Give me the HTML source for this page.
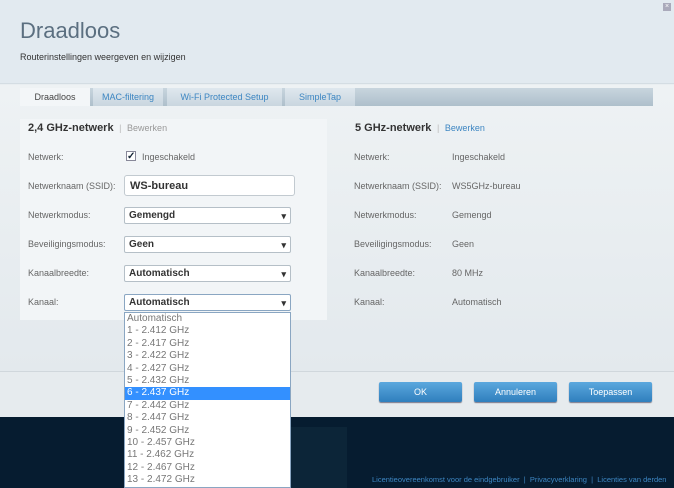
<!DOCTYPE html>
<html><head><style>
*{margin:0;padding:0;box-sizing:border-box}
body{width:674px;height:488px;overflow:hidden;font-family:"Liberation Sans",sans-serif;background:#e9eef1;position:relative}
.a{position:absolute}
.top{left:0;top:0;width:674px;height:84px;background:#e2eaf0;border-bottom:1px solid #d4dde3}
h1{position:absolute;left:20px;top:18px;font-weight:normal;font-size:22px;color:#5b6f80}
.sub{left:20px;top:52px;font-size:9px;color:#333}
.main{left:0;top:85px;width:674px;height:286px;background:linear-gradient(#eef2f4,#e3e9ed)}
.tabs{left:20px;top:88px;width:633px;height:18px;background:linear-gradient(#c8d5de,#aebfcb)}
.tab{position:absolute;top:0;height:18px;font-size:9px;color:#3d86c2;padding-top:4px;text-align:center;background:linear-gradient(#dfe8ee,#c9d6df)}
.lp{left:20px;top:119px;width:307px;height:201px;background:#f2f5f7}
.lbl{font-size:9px;color:#666}
.h{font-size:11px;font-weight:bold;color:#333}
.lnk{font-size:9px}
.sel{position:absolute;left:124px;width:167px;height:17px;background:#fff;border:1px solid #b5bfc7;border-radius:2px;font-size:10px;font-weight:bold;color:#333;padding:0 4px;line-height:16px}
.sel:after{content:"▾";position:absolute;right:4px;top:0;font-size:9px}
.list{left:124px;top:312px;width:167px;height:176px;background:#fff;border:1px solid #8aa6c2;font-size:10px;color:#777}
.list div{height:12.4px;line-height:12.4px;padding-left:2px}
.list .hl{background:#3390ff;color:#fff}
.foot{left:0;top:371px;width:674px;height:46px;background:#e6ebee;border-top:1px solid #d0d7dc}
.btn{position:absolute;top:382px;width:83px;height:20px;border-radius:2px;background:linear-gradient(#5ba8de,#2f7fbd);color:#fff;font-size:9px;text-align:center;line-height:20px;box-shadow:0 1px 1px #778}
.dark{left:0;top:417px;width:674px;height:71px;background:#061c30}
</style></head><body>
<div class="a top"></div>
<h1>Draadloos</h1>
<div class="a sub">Routerinstellingen weergeven en wijzigen</div>
<div class="a" style="right:3px;top:3px;width:8px;height:8px;background:#aab;font-size:7px;color:#fff;line-height:8px;text-align:center">×</div>
<div class="a main"></div>
<div class="a tabs">
<div class="tab" style="left:0;width:70px;background:#f3f6f8;color:#444">Draadloos</div>
<div class="tab" style="left:73px;width:70px">MAC-filtering</div>
<div class="tab" style="left:147px;width:115px">Wi-Fi Protected Setup</div>
<div class="tab" style="left:265px;width:70px">SimpleTap</div>
</div>
<div class="a lp"></div>
<div class="a h" style="left:28px;top:122px">2,4 GHz-netwerk <span style="color:#bbb;font-weight:normal;font-size:9px">&nbsp;|&nbsp;</span> <span class="lnk" style="color:#999;font-weight:normal">Bewerken</span></div>
<div class="a h" style="left:355px;top:122px">5 GHz-netwerk <span style="color:#bbb;font-weight:normal;font-size:9px">&nbsp;|&nbsp;</span> <span class="lnk" style="color:#3d86c2;font-weight:normal">Bewerken</span></div>
<div class="a lbl" style="left:28px;top:152px">Netwerk:</div>
<div class="a lbl" style="left:28px;top:181px">Netwerknaam (SSID):</div>
<div class="a lbl" style="left:28px;top:210px">Netwerkmodus:</div>
<div class="a lbl" style="left:28px;top:239px">Beveiligingsmodus:</div>
<div class="a lbl" style="left:28px;top:268px">Kanaalbreedte:</div>
<div class="a lbl" style="left:28px;top:297px">Kanaal:</div>
<div class="a" style="left:126px;top:151px;width:10px;height:10px;border:1px solid #889;background:#fff;font-size:10px;line-height:9px;color:#123;font-weight:bold">✓</div>
<div class="a lbl" style="left:142px;top:152px">Ingeschakeld</div>
<div class="a" style="left:124px;top:175px;width:171px;height:21px;background:#fff;border:1px solid #c2cad0;border-radius:3px;font-size:11px;font-weight:bold;color:#333;padding:4px 5px">WS-bureau</div>
<div class="sel" style="top:207px">Gemengd</div>
<div class="sel" style="top:236px">Geen</div>
<div class="sel" style="top:265px">Automatisch</div>
<div class="sel" style="top:294px;border-color:#8aa6c2">Automatisch</div>
<div class="a lbl" style="left:354px;top:152px">Netwerk:</div>
<div class="a lbl" style="left:354px;top:181px">Netwerknaam (SSID):</div>
<div class="a lbl" style="left:354px;top:210px">Netwerkmodus:</div>
<div class="a lbl" style="left:354px;top:239px">Beveiligingsmodus:</div>
<div class="a lbl" style="left:354px;top:268px">Kanaalbreedte:</div>
<div class="a lbl" style="left:354px;top:297px">Kanaal:</div>
<div class="a lbl" style="left:452px;top:152px">Ingeschakeld</div>
<div class="a lbl" style="left:452px;top:181px">WS5GHz-bureau</div>
<div class="a lbl" style="left:452px;top:210px">Gemengd</div>
<div class="a lbl" style="left:452px;top:239px">Geen</div>
<div class="a lbl" style="left:452px;top:268px">80 MHz</div>
<div class="a lbl" style="left:452px;top:297px">Automatisch</div>
<div class="a foot"></div>
<div class="btn" style="left:379px">OK</div>
<div class="btn" style="left:474px">Annuleren</div>
<div class="btn" style="left:569px">Toepassen</div>
<div class="a dark"></div>
<div class="a" style="left:225px;top:427px;width:122px;height:61px;background:#0c2538"></div>
<div class="a" style="left:372px;top:475px;font-size:7.5px;color:#3d86c2;white-space:nowrap">Licentieovereenkomst voor de eindgebruiker &nbsp;|&nbsp; Privacyverklaring &nbsp;|&nbsp; Licenties van derden</div>
<div class="a list">
<div>Automatisch</div><div>1 - 2.412 GHz</div><div>2 - 2.417 GHz</div><div>3 - 2.422 GHz</div><div>4 - 2.427 GHz</div><div>5 - 2.432 GHz</div><div class="hl">6 - 2.437 GHz</div><div>7 - 2.442 GHz</div><div>8 - 2.447 GHz</div><div>9 - 2.452 GHz</div><div>10 - 2.457 GHz</div><div>11 - 2.462 GHz</div><div>12 - 2.467 GHz</div><div>13 - 2.472 GHz</div>
</div>
</body></html>
